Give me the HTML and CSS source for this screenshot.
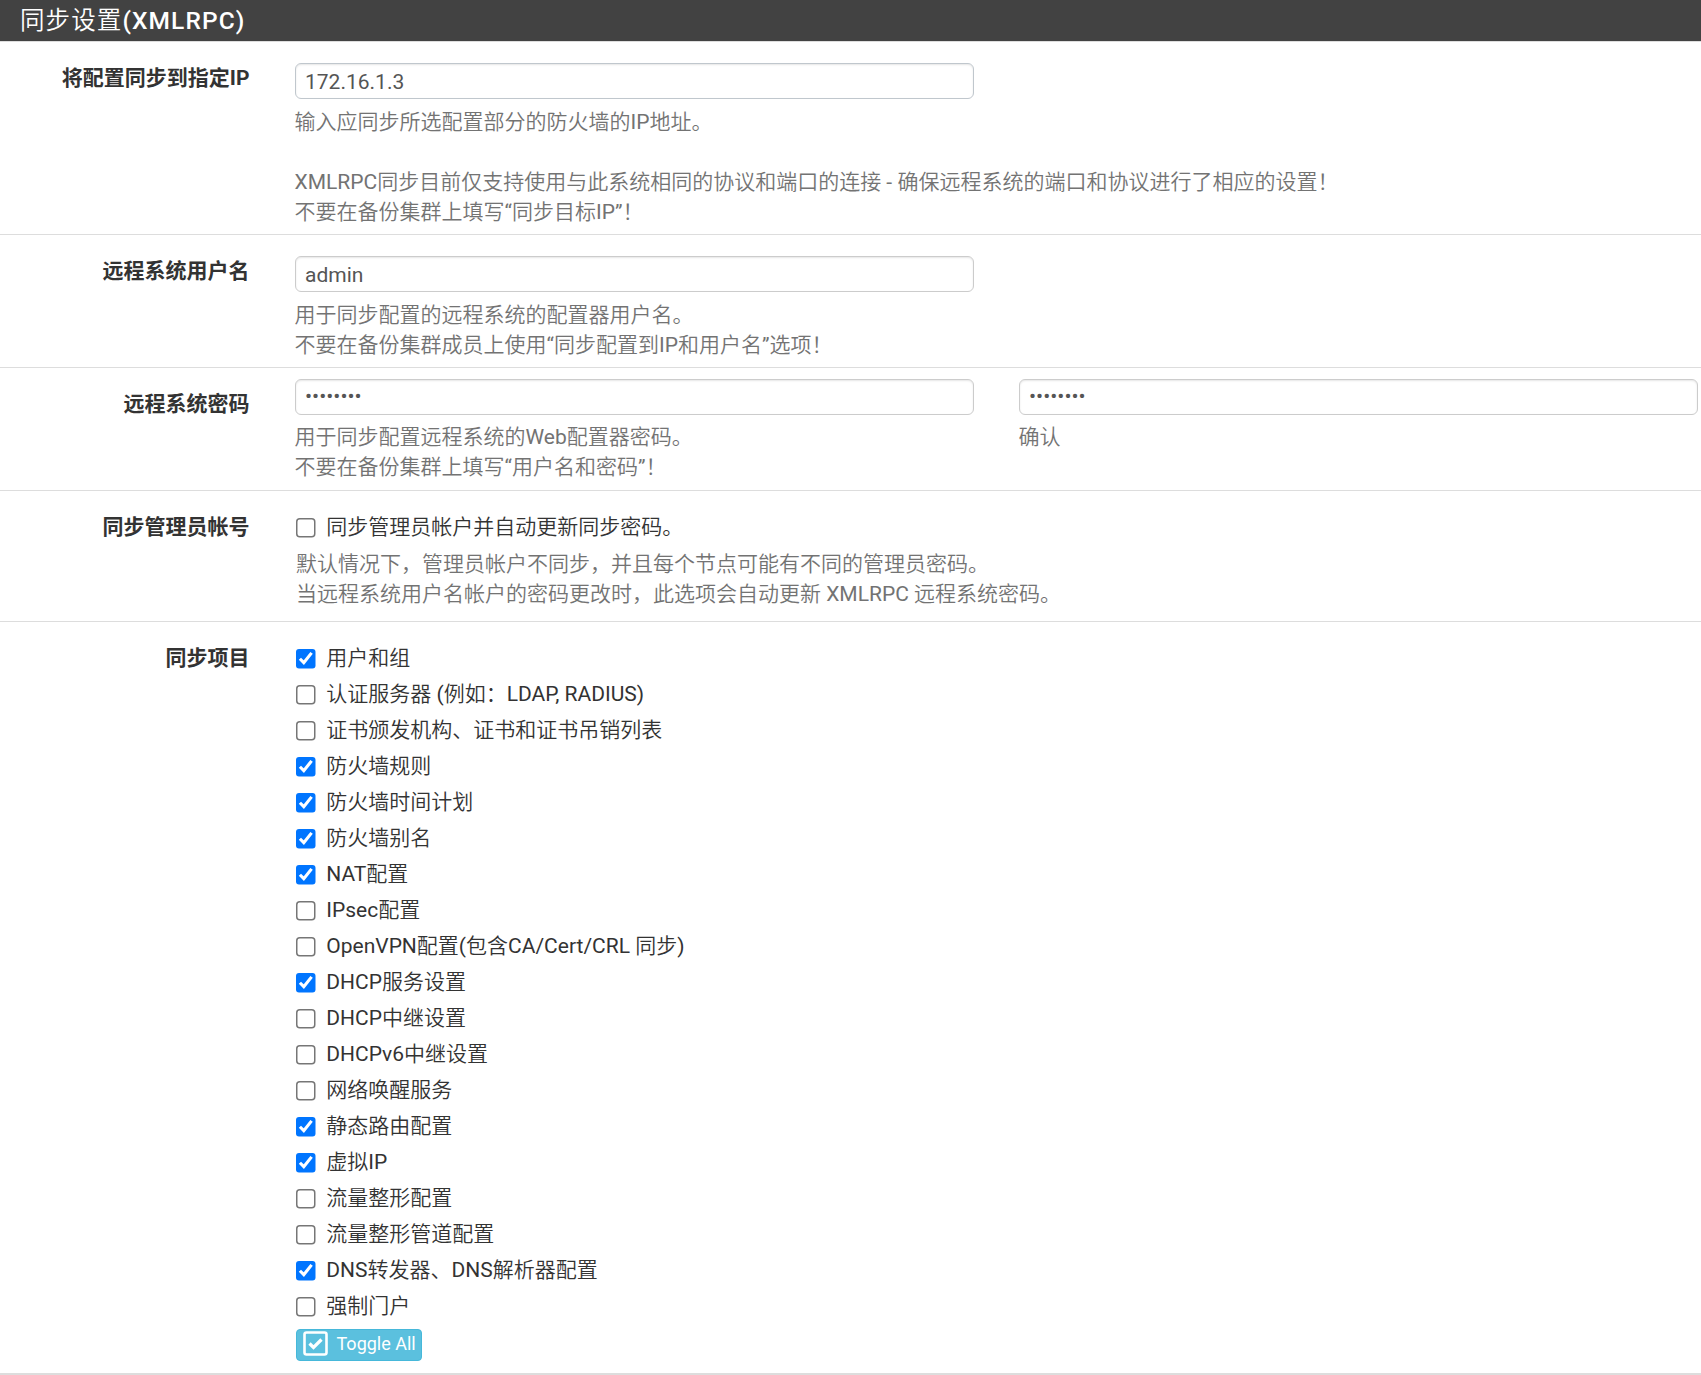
FILE: index.html
```html
<!DOCTYPE html>
<html lang="zh-CN">
<head>
    <meta charset="UTF-8">
    <meta name="viewport" content="width=device-width, initial-scale=1.0">
    <title>同步设置(XMLRPC)</title>
    <link rel="stylesheet" href="styles.css">
</head>
<body>
    <form class="panel">
        <h2 class="panel-title">同步设置(XMLRPC)</h2>

        <div class="form-group">
            <label class="control-label" for="syncip">将配置同步到指定IP</label>
            <div class="field">
                <input class="form-control synchronize" id="syncip" type="text" value="172.16.1.3">
                <p class="help">输入应同步所选配置部分的防火墙的IP地址。<br><br>XMLRPC同步目前仅支持使用与此系统相同的协议和端口的连接 - 确保远程系统的端口和协议进行了相应的设置！<br>不要在备份集群上填写“同步目标IP”！</p>
            </div>
        </div>

        <div class="form-group">
            <label class="control-label" for="username">远程系统用户名</label>
            <div class="field">
                <input class="form-control" id="username" type="text" value="admin">
                <p class="help">用于同步配置的远程系统的配置器用户名。<br>不要在备份集群成员上使用“同步配置到IP和用户名”选项！</p>
            </div>
        </div>

        <div class="form-group password-group">
            <label class="control-label" for="password">远程系统密码</label>
            <div class="field">
                <input class="form-control" id="password" type="password" value="password">
                <p class="help">用于同步配置远程系统的Web配置器密码。<br>不要在备份集群上填写“用户名和密码”！</p>
            </div>
            <div class="field">
                <input class="form-control" id="confirm" type="password" value="password">
                <p class="help">确认</p>
            </div>
        </div>

        <div class="form-group check-group">
            <span class="control-label">同步管理员帐号</span>
            <div class="checks">
                <label class="check"><input type="checkbox"> 同步管理员帐户并自动更新同步密码。</label>
                <p class="help">默认情况下，管理员帐户不同步，并且每个节点可能有不同的管理员密码。<br>当远程系统用户名帐户的密码更改时，此选项会自动更新 XMLRPC 远程系统密码。</p>
            </div>
        </div>

        <div class="form-group check-group">
            <span class="control-label">同步项目</span>
            <div class="checks">
                <label class="check"><input type="checkbox" checked> 用户和组</label>
                <label class="check"><input type="checkbox"> 认证服务器 (例如：LDAP, RADIUS)</label>
                <label class="check"><input type="checkbox"> 证书颁发机构、证书和证书吊销列表</label>
                <label class="check"><input type="checkbox" checked> 防火墙规则</label>
                <label class="check"><input type="checkbox" checked> 防火墙时间计划</label>
                <label class="check"><input type="checkbox" checked> 防火墙别名</label>
                <label class="check"><input type="checkbox" checked> NAT配置</label>
                <label class="check"><input type="checkbox"> IPsec配置</label>
                <label class="check"><input type="checkbox"> OpenVPN配置(包含CA/Cert/CRL 同步)</label>
                <label class="check"><input type="checkbox" checked> DHCP服务设置</label>
                <label class="check"><input type="checkbox"> DHCP中继设置</label>
                <label class="check"><input type="checkbox"> DHCPv6中继设置</label>
                <label class="check"><input type="checkbox"> 网络唤醒服务</label>
                <label class="check"><input type="checkbox" checked> 静态路由配置</label>
                <label class="check"><input type="checkbox" checked> 虚拟IP</label>
                <label class="check"><input type="checkbox"> 流量整形配置</label>
                <label class="check"><input type="checkbox"> 流量整形管道配置</label>
                <label class="check"><input type="checkbox" checked> DNS转发器、DNS解析器配置</label>
                <label class="check"><input type="checkbox"> 强制门户</label>
                <button class="btn-info" type="button">
                    <svg class="icon" viewBox="0 0 25 25" fill="none" stroke="#fff">
                        <rect x="1.5" y="1.5" width="22" height="22" rx="2" stroke-width="2.6"/>
                        <path d="M6.5 12.5l4 4 8-8" stroke-width="3.2"/>
                    </svg>
                    Toggle All
                </button>
            </div>
        </div>
    </form>
</body>
</html>
```

FILE: styles.css
```css
* {
    box-sizing: border-box;
}

body {
    margin: 0;
    background-color: #fff;
    color: #333;
    font-family: Roboto, "Noto Sans CJK SC DemiLight", "Noto Sans CJK SC Light", "Noto Sans CJK SC", sans-serif;
    font-size: 21px;
    line-height: 30px;
    overflow: hidden;
}

.panel-title {
    height: 42px;
    margin: 0;
    padding: 0 20px;
    background-color: #424242;
    border-bottom: 1px solid #ddd;
    color: #fff;
    font-size: 24.5px;
    font-weight: 500;
    letter-spacing: 1.1px;
    line-height: 41px;
}

.form-group {
    display: grid;
    grid-template-columns: 249.5px 679px 679px;
    column-gap: 45px;
    padding: 21px 0 7px;
    border-bottom: 1px solid #ddd;
}

.form-group:last-child {
    border-bottom-width: 2px;
}

.control-label {
    font-family: Roboto, "Noto Sans CJK SC", sans-serif;
    font-weight: bold;
    text-align: right;
}

.form-control {
    display: block;
    width: 100%;
    height: 36px;
    padding: 1px 9.5px 0;
    border: 1px solid #ccc;
    border-radius: 6px;
    box-shadow: inset 0 1px 2px rgba(0, 0, 0, 0.1);
    background-color: #fff;
    color: #555;
    font-family: inherit;
    font-size: 21px;
}

.synchronize {
    border-color: #c0c7cd;
}

.help {
    margin: 8px 0 0;
    color: #737373;
    white-space: nowrap;
}

.password-group {
    padding: 11px 0 8px;
}

.password-group .form-control {
    padding: 0 9.5px 2px;
}

.password-group .help {
    margin-top: 7px;
}

.password-group .control-label {
    padding-top: 10px;
}

.check-group {
    padding: 21px 0 12px;
}

.checks {
    padding-left: 1.5px;
}

.check-group .help {
    margin-top: 7px;
}

.check {
    display: flex;
    align-items: center;
    height: 30px;
    margin-bottom: 6px;
    white-space: nowrap;
}

.check input {
    zoom: 1.5;
    width: 13.4px;
    height: 13.4px;
    margin: 1px 6.8px 0 0;
}

.btn-info {
    display: flex;
    align-items: center;
    gap: 8.5px;
    width: 126px;
    height: 32px;
    margin-top: 8px;
    padding: 0 6px 3px;
    border: 1px solid #46b8da;
    border-radius: 4px;
    background-color: #5bc0de;
    color: #fff;
    font-family: inherit;
    font-size: 18px;
    white-space: nowrap;
}

.icon {
    flex: none;
    width: 25px;
    height: 25px;
}
```
